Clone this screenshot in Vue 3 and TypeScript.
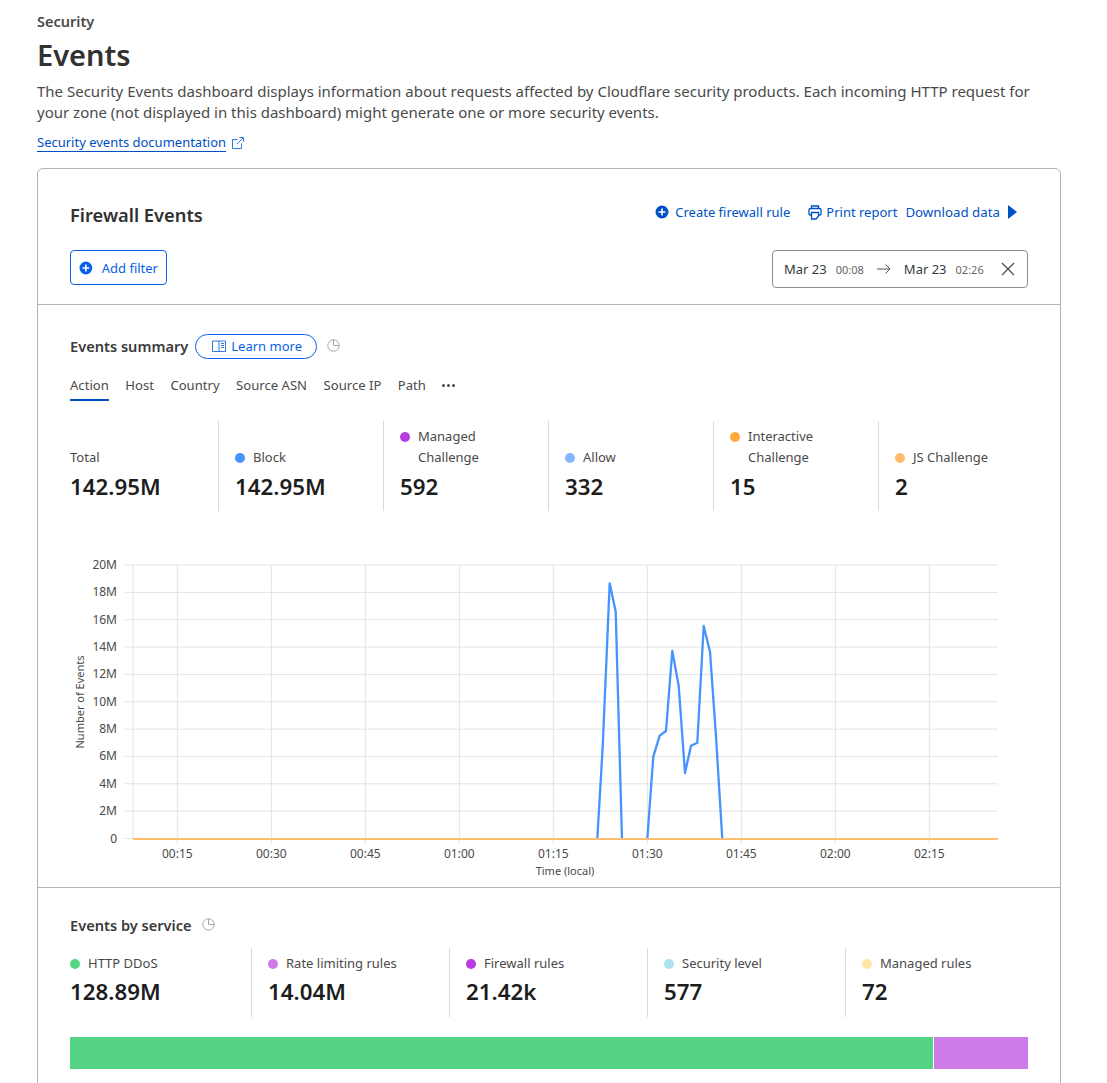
<script setup lang="ts">
interface Stat {
  label: string[]
  value: string
  color?: string
}

const tabs = ['Action', 'Host', 'Country', 'Source ASN', 'Source IP', 'Path']

const actionStats: Stat[] = [
  { label: ['Total'], value: '142.95M' },
  { label: ['Block'], value: '142.95M', color: '#4693ff' },
  { label: ['Managed', 'Challenge'], value: '592', color: '#b73be0' },
  { label: ['Allow'], value: '332', color: '#82b5ff' },
  { label: ['Interactive', 'Challenge'], value: '15', color: '#ffa940' },
  { label: ['JS Challenge'], value: '2', color: '#ffbd6d' }
]

const serviceStats: Stat[] = [
  { label: ['HTTP DDoS'], value: '128.89M', color: '#55d584' },
  { label: ['Rate limiting rules'], value: '14.04M', color: '#ce7bea' },
  { label: ['Firewall rules'], value: '21.42k', color: '#b73be0' },
  { label: ['Security level'], value: '577', color: '#aee1f2' },
  { label: ['Managed rules'], value: '72', color: '#ffe5a8' }
]

// chart coordinates are relative to the svg, which starts at y=550 and x=70
const plotLeft = 63
const plotRight = 928
const zeroY = 288.5
const stepY = 27.35

const yTicks = ['0', '2M', '4M', '6M', '8M', '10M', '12M', '14M', '16M', '18M', '20M'].map((label, i) => ({
  label,
  y: zeroY - i * stepY
}))

const xTicks = ['00:15', '00:30', '00:45', '01:00', '01:15', '01:30', '01:45', '02:00', '02:15'].map((label, i) => ({
  label,
  x: 107.3 + i * 94
}))

// the block series sits under the baseline except for these two bursts
const blockBursts = [
  [[527.3, 289], [532.7, 196.7], [539.7, 33.3], [545.7, 61.7], [552, 289]],
  [
    [577.3, 289], [583.3, 206.7], [589.7, 185.7], [596, 181], [602.3, 101], [608.7, 136],
    [615, 223], [621, 195.7], [627.3, 192.7], [633.7, 76], [640, 101.7], [646, 186.7],
    [652.3, 289]
  ]
].map((burst) => burst.map((p) => p.join(',')).join(' '))
</script>

<template>
  <div class="page">
    <div class="crumb">Security</div>
    <h1>Events</h1>
    <p class="intro">
      The Security Events dashboard displays information about requests affected by Cloudflare security products. Each incoming HTTP request for
      your zone (not displayed in this dashboard) might generate one or more security events.
    </p>
    <div class="doc-row">
      <a class="doc-link">Security events documentation</a>
      <svg class="ext" width="12" height="12" viewBox="0 0 12 12" fill="none" stroke="#2f7bdc">
        <path d="M5.500 2.500H.5v9h9V6.500" />
        <path d="M5 7l6-6M7.500.5h4V4.500" />
      </svg>
    </div>

    <div class="card">
      <section class="head">
        <div class="head-row">
          <h2>Firewall Events</h2>
          <div class="actions">
            <a class="action">
              <svg width="14" height="14" viewBox="0 0 14 14">
                <circle cx="7" cy="7" r="6.500" fill="#0051c3" />
                <path d="M7 3.500v7M3.500 7h7" stroke="#fff" stroke-width="1.600" />
              </svg>
              Create firewall rule
            </a>
            <a class="action print">
              <svg width="14" height="15" viewBox="0 0 14 15" fill="none" stroke="#0051c3" stroke-width="1.300">
                <path d="M3.500 3.500V1h7v2.500" />
                <path d="M3.500 10H2a1 1 0 0 1-1-1V5a1.500 1.500 0 0 1 1.500-1.500h9A1.500 1.500 0 0 1 13 5v4a1 1 0 0 1-1 1h-1.500" />
                <path d="M3.500 7.500h7v3.500L8 14H3.500z" />
              </svg>
              Print report
            </a>
            <a class="action download">
              Download data
              <svg class="caret" width="9" height="14" viewBox="0 0 9 14"><path d="M0 0l9 7-9 7z" fill="#0051c3" /></svg>
            </a>
          </div>
        </div>
        <div class="filter-row">
          <button class="add-filter">
            <svg width="14" height="14" viewBox="0 0 14 14">
              <circle cx="7" cy="7" r="6.500" fill="#0a5fe8" />
              <path d="M7 3.500v7M3.500 7h7" stroke="#fff" stroke-width="1.600" />
            </svg>
            Add filter
          </button>
          <div class="range">
            <span class="date">Mar 23</span>
            <span class="time">00:08</span>
            <svg class="arrow" width="16" height="12" viewBox="0 0 16 12" fill="none" stroke="#555">
              <path d="M1 6h13M9.500 1.500L14 6l-4.500 4.500" />
            </svg>
            <span class="date">Mar 23</span>
            <span class="time">02:26</span>
            <svg class="close" width="14" height="14" viewBox="0 0 14 14" fill="none" stroke="#444" stroke-width="1.100">
              <path d="M1 1l12 12M13 1L1 13" />
            </svg>
          </div>
        </div>
      </section>

      <section class="summary">
        <div class="title-row">
          <h3>Events summary</h3>
          <a class="pill">
            <svg width="14" height="13" viewBox="0 0 14 13" fill="none" stroke="#2f7bdc">
              <path d="M.5 1h13v10.500H.5zM7 1v10.500" />
              <path d="M9 3.500h3M9 5.500h3M9 7.500h3" />
            </svg>
            Learn more
          </a>
          <svg class="pie" width="13" height="13" viewBox="0 0 13 13" fill="none" stroke="#a6a6a6">
            <circle cx="6.500" cy="6.500" r="5.700" />
            <path d="M6.500.8v5.700h5.700" />
          </svg>
        </div>
        <div class="tabs">
          <a v-for="(tab, i) in tabs" :key="tab" class="tab" :class="{ active: i === 0 }">{{ tab }}</a>
          <span class="more"><i /><i /><i /></span>
        </div>
        <div class="stats stats-action">
          <div v-for="stat in actionStats" :key="stat.label.join()" class="stat">
            <div class="stat-label" :class="{ dotted: stat.color }">
              <span v-if="stat.color" class="dot" :style="{ background: stat.color }" />
              <span v-for="line in stat.label" :key="line" class="line">{{ line }}</span>
            </div>
            <div class="stat-value">{{ stat.value }}</div>
          </div>
        </div>

        <svg class="chart" width="968" height="337" viewBox="0 0 968 337">
          <line v-for="t in yTicks" :key="t.label" x1="55" :x2="plotRight" :y1="t.y" :y2="t.y" stroke="#e3e3e3" />
          <line :x1="plotLeft" :x2="plotLeft" y1="15" :y2="zeroY" stroke="#e3e3e3" />
          <line v-for="t in xTicks" :key="t.label" :x1="t.x" :x2="t.x" y1="15" y2="294" stroke="#e3e3e3" />
          <text v-for="t in yTicks" :key="t.label" x="47" :y="t.y + 4" text-anchor="end" class="tick">{{ t.label }}</text>
          <text v-for="t in xTicks" :key="t.label" :x="t.x" y="308" text-anchor="middle" class="tick">{{ t.label }}</text>
          <text x="495" y="325" text-anchor="middle" class="axis">Time (local)</text>
          <text transform="translate(14 152) rotate(-90)" text-anchor="middle" class="axis">Number of Events</text>
          <polyline v-for="points in blockBursts" :key="points" :points="points" fill="none" stroke="#4693ff" stroke-width="2.300" stroke-linejoin="round" />
          <line :x1="plotLeft" :x2="plotRight" y1="289" y2="289" stroke="#ffbd6d" stroke-width="2" />
        </svg>
      </section>

      <section class="service">
        <div class="title-row service-title">
          <h3>Events by service</h3>
          <svg class="pie" width="13" height="13" viewBox="0 0 13 13" fill="none" stroke="#a6a6a6">
            <circle cx="6.500" cy="6.500" r="5.700" />
            <path d="M6.500.8v5.700h5.700" />
          </svg>
        </div>
        <div class="stats stats-service">
          <div v-for="stat in serviceStats" :key="stat.label.join()" class="stat">
            <div class="stat-label dotted">
              <span class="dot" :style="{ background: stat.color }" />
              <span v-for="line in stat.label" :key="line" class="line">{{ line }}</span>
            </div>
            <div class="stat-value">{{ stat.value }}</div>
          </div>
        </div>
        <div class="bar">
          <span class="bar-green" />
          <span class="bar-purple" />
        </div>
      </section>
    </div>
  </div>
</template>

<style>
html,
body {
  height: 1083px;
  overflow: hidden;
  background: #fff;
}
</style>

<style scoped>
.page {
  box-sizing: border-box;
  width: 1107px;
  height: 1083px;
  overflow: hidden;
  padding: 11px 46px 0 37px;
  font-family: 'Noto Sans', 'Open Sans', sans-serif;
  color: #36393a;
}

.crumb {
  font-size: 14.5px;
  font-weight: 600;
  line-height: 20px;
  color: #4a4a4a;
}

h1 {
  margin: 3px 0 0;
  font-size: 29px;
  line-height: 42px;
  font-weight: 600;
  color: #313131;
}

.intro {
  margin: 5px 0 0;
  font-size: 15px;
  line-height: 20.5px;
  color: #4a4a4a;
}

.doc-row {
  display: flex;
  align-items: center;
  gap: 6px;
  margin-top: 11px;
  height: 20px;
}

.doc-link {
  font-size: 13px;
  line-height: 17px;
  color: #0051c3;
  border-bottom: 1px solid #0051c3;
}

.card {
  margin-top: 15px;
  border: 1px solid #b5b5b5;
  border-radius: 6px;
}

.head {
  padding: 32px 32px 16px;
  border-bottom: 1px solid #b5b5b5;
}

.head-row {
  display: flex;
  justify-content: space-between;
  align-items: flex-start;
  padding-right: 11px;
}

h2 {
  margin: 0;
  font-size: 18.3px;
  line-height: 27px;
  font-weight: 600;
  color: #313131;
}

.actions {
  display: flex;
  gap: 8px;
  margin-top: 1px;
}

.action {
  display: inline-flex;
  align-items: center;
  gap: 6px;
  font-size: 13px;
  line-height: 20px;
  color: #0051c3;
}

.action.print {
  gap: 4px;
  margin-left: 10px;
}

.action.download {
  font-size: 13.3px;
}

.caret {
  margin-left: 2px;
}

.filter-row {
  display: flex;
  justify-content: space-between;
  align-items: flex-start;
  margin-top: 22px;
}

.add-filter {
  display: inline-flex;
  align-items: center;
  gap: 9px;
  box-sizing: border-box;
  width: 97px;
  height: 35px;
  padding: 0 8px;
  border: 1px solid #0a5fe8;
  border-radius: 4px;
  background: #fff;
  font: inherit;
  font-size: 13px;
  white-space: nowrap;
  color: #0a5fe8;
}

.range {
  display: flex;
  align-items: center;
  box-sizing: border-box;
  width: 256px;
  height: 38px;
  padding: 0 12px 0 11px;
  border: 1px solid #8c8c8c;
  border-radius: 4px;
  font-size: 13px;
  color: #36393a;
}

.time {
  margin-left: 9px;
  font-size: 11px;
  color: #666;
}

.arrow {
  margin: 0 12px;
}

.close {
  margin-left: auto;
}

.summary {
  padding: 28px 32px 0;
  border-bottom: 1px solid #b5b5b5;
}

.title-row {
  display: flex;
  align-items: center;
  height: 26px;
}

h3 {
  margin: 0;
  font-size: 14.6px;
  line-height: 22px;
  font-weight: 600;
  color: #3a3a3a;
}

.pill {
  display: inline-flex;
  align-items: center;
  gap: 5px;
  box-sizing: border-box;
  width: 122px;
  height: 25px;
  margin-left: 7px;
  padding: 0 14px 0 16px;
  border: 1px solid #0a5fe8;
  border-radius: 13px;
  font-size: 13px;
  color: #0a5fe8;
}

.pie {
  margin: -2px 0 0 10px;
}

.tabs {
  display: flex;
  align-items: flex-start;
  gap: 16.5px;
  margin-top: 17px;
  height: 25px;
}

.tab {
  height: 25px;
  font-size: 13.1px;
  line-height: 18px;
  color: #4a4a4a;
}

.tab.active {
  border-bottom: 2px solid #0051c3;
  box-sizing: border-box;
}

.more {
  display: flex;
  gap: 2px;
  margin: 8px 0 0;
}

.more i {
  width: 3px;
  height: 3px;
  border-radius: 50%;
  background: #4a4a4a;
}

.stats {
  display: grid;
  margin-left: -17px;
  margin-right: -16px;
}

.stats-action {
  grid-template-columns: repeat(6, 165px);
  margin-top: 20px;
  height: 90px;
}

.stats-service {
  grid-template-columns: repeat(5, 198px);
  margin-top: 12px;
  height: 69px;
}

.stat {
  box-sizing: border-box;
  display: flex;
  flex-direction: column;
  justify-content: flex-end;
  padding: 0 16px 7px;
  border-left: 1px solid #d9d9d9;
}

.stat:first-child {
  border-left-color: transparent;
}

.stats-service .stat {
  justify-content: flex-start;
  padding-top: 5px;
}

.stat-label {
  position: relative;
  font-size: 13px;
  line-height: 21px;
  color: #4a4a4a;
}

.stat-label.dotted {
  padding-left: 18px;
}

.line {
  display: block;
}

.dot {
  position: absolute;
  left: 0;
  top: 6px;
  width: 10px;
  height: 10px;
  border-radius: 50%;
}

.stat-value {
  margin-top: 2px;
  font-size: 22.3px;
  line-height: 34px;
  font-weight: 600;
  color: #1d1d1d;
}

.stats-service .stat-value {
  margin-top: 1px;
}

.chart {
  display: block;
  margin-top: 39px;
}

.tick {
  font-size: 12px;
  fill: #4a4a4a;
  font-family: 'Noto Sans', sans-serif;
}

.axis {
  font-size: 11px;
  fill: #4a4a4a;
  font-family: 'Noto Sans', sans-serif;
}

.service {
  padding: 26px 32px 60px;
}

.service-title {
  height: 22px;
}

.bar {
  display: flex;
  gap: 1px;
  height: 32px;
  margin-top: 20px;
  width: 958px;
}

.bar-green {
  width: 863px;
  background: #55d584;
}

.bar-purple {
  flex: 1;
  background: #ce7bea;
}
</style>
